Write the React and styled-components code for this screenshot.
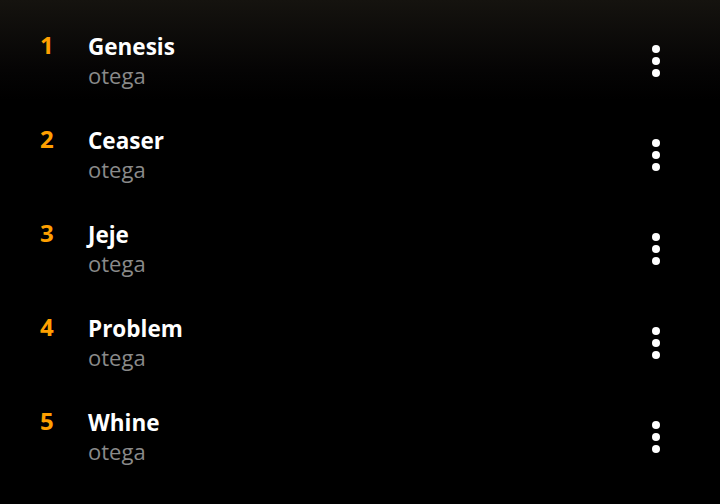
import React from "react";
import styled, { createGlobalStyle } from "styled-components";

const Global = createGlobalStyle`
  html, body { margin: 0; padding: 0; background: #000; }
  body { font-family: "Open Sans", "Liberation Sans", sans-serif; }
`;

const Page = styled.div`
  width: 720px;
  height: 504px;
  background: linear-gradient(180deg, #15130f 0px, #050404 70px, #000 100px);
  padding-top: 13px;
  box-sizing: border-box;
  overflow: hidden;
`;

const List = styled.ul`
  list-style: none;
  margin: 0;
  padding: 0;
`;

const Row = styled.li`
  display: flex;
  align-items: center;
  padding: 17px 51px 17px 40px;
`;

const Rank = styled.div`
  width: 48px;
  flex: none;
  align-self: flex-start;
  color: #ffa000;
  font-size: 24px;
  font-weight: 700;
  line-height: 30px;
`;

const Info = styled.div`
  flex: 1;
  display: flex;
  flex-direction: column;
`;

const Title = styled.div`
  color: #fff;
  font-size: 22.5px;
  font-weight: 700;
  line-height: 30px;
  margin-top: 2px;
`;

const Sub = styled.div`
  color: #8a8a8a;
  font-size: 22px;
  font-weight: 400;
  line-height: 30px;
  margin-top: -2px;
`;

const MoreButton = styled.button`
  width: 26px;
  height: 36px;
  margin-top: 2px;
  padding: 0;
  border: 0;
  background: transparent;
  display: flex;
  align-items: center;
  justify-content: center;
  cursor: pointer;
`;

const Dots = () => (
  <svg width="8" height="32" viewBox="0 0 8 32">
    <circle cx="4" cy="4" r="4" fill="#fff" />
    <circle cx="4" cy="16" r="4" fill="#fff" />
    <circle cx="4" cy="28" r="4" fill="#fff" />
  </svg>
);

const songs = ["Genesis", "Ceaser", "Jeje", "Problem", "Whine"];

export default function App() {
  return (
    <>
      <Global />
      <Page>
        <List>
          {songs.map((s, i) => (
            <Row key={s}>
              <Rank>{i + 1}</Rank>
              <Info>
                <Title>{s}</Title>
                <Sub>otega</Sub>
              </Info>
              <MoreButton aria-label="More">
                <Dots />
              </MoreButton>
            </Row>
          ))}
        </List>
      </Page>
    </>
  );
}
